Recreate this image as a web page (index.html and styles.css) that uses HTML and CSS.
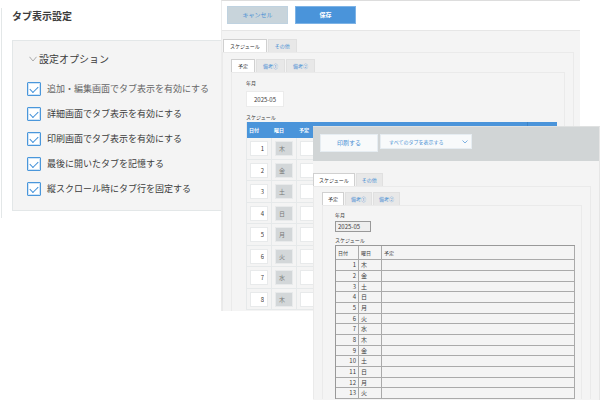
FILE: index.html
```html
<!DOCTYPE html>
<html lang="ja">
  <head>
    <meta charset="UTF-8" />
    <meta name="viewport" content="width=device-width, initial-scale=1.0" />
    <title>タブ表示設定</title>
    <link rel="stylesheet" href="styles.css">
  </head>
  <body>
    <div class="stage">
      <!-- settings -->
      <section class="settings">
        <h1 class="title">タブ表示設定</h1>
        <div class="options">
          <h2 class="options-head">
            <svg class="arrow" viewBox="0 0 8 6"><path d="M0.5 0.8 L4 5 L7.5 0.8" /></svg>
            設定オプション
          </h2>
          <label class="option muted"><input type="checkbox" class="check" checked />追加・編集画面でタブ表示を有効にする</label>
          <label class="option"><input type="checkbox" class="check" checked />詳細画面でタブ表示を有効にする</label>
          <label class="option"><input type="checkbox" class="check" checked />印刷画面でタブ表示を有効にする</label>
          <label class="option"><input type="checkbox" class="check" checked />最後に開いたタブを記憶する</label>
          <label class="option"><input type="checkbox" class="check" checked />縦スクロール時にタブ行を固定する</label>
        </div>
      </section>

      <!-- edit screen -->
      <section class="window edit">
        <div class="toolbar">
          <button type="button" class="btn cancel">キャンセル</button>
          <button type="button" class="btn save">保存</button>
        </div>
        <div class="tabs">
          <button type="button" class="tab active">スケジュール</button>
          <button type="button" class="tab">その他</button>
        </div>
        <div class="panel">
          <div class="tabs">
            <button type="button" class="tab active">予定</button>
            <button type="button" class="tab">備考①</button>
            <button type="button" class="tab">備考②</button>
          </div>
          <div class="panel inner">
            <label class="label" for="month">年月</label>
            <input type="text" class="month" id="month" value="2025-05" />
            <p class="label">スケジュール</p>
            <table class="grid">
              <thead>
                <tr><th class="c-day">日付</th><th class="c-week">曜日</th><th>予定</th><th class="c-end"></th></tr>
              </thead>
              <tbody>
                <tr><td><input class="cell num" aria-label="日付" value="1" /></td><td><span class="cell week">木</span></td><td><input class="cell" aria-label="予定" /></td><td></td></tr>
                <tr><td><input class="cell num" aria-label="日付" value="2" /></td><td><span class="cell week">金</span></td><td><input class="cell" aria-label="予定" /></td><td></td></tr>
                <tr><td><input class="cell num" aria-label="日付" value="3" /></td><td><span class="cell week">土</span></td><td><input class="cell" aria-label="予定" /></td><td></td></tr>
                <tr><td><input class="cell num" aria-label="日付" value="4" /></td><td><span class="cell week">日</span></td><td><input class="cell" aria-label="予定" /></td><td></td></tr>
                <tr><td><input class="cell num" aria-label="日付" value="5" /></td><td><span class="cell week">月</span></td><td><input class="cell" aria-label="予定" /></td><td></td></tr>
                <tr><td><input class="cell num" aria-label="日付" value="6" /></td><td><span class="cell week">火</span></td><td><input class="cell" aria-label="予定" /></td><td></td></tr>
                <tr><td><input class="cell num" aria-label="日付" value="7" /></td><td><span class="cell week">水</span></td><td><input class="cell" aria-label="予定" /></td><td></td></tr>
                <tr><td><input class="cell num" aria-label="日付" value="8" /></td><td><span class="cell week">木</span></td><td><input class="cell" aria-label="予定" /></td><td></td></tr>
              </tbody>
            </table>
          </div>
        </div>
      </section>

      <!-- print screen -->
      <section class="window print">
        <div class="toolbar">
          <button type="button" class="btn do-print">印刷する</button>
          <div class="select-box">
            <select class="select" aria-label="表示するタブ">
              <option>すべてのタブを表示する</option>
            </select>
            <svg class="caret" viewBox="0 0 6 4"><path d="M0.5 0.5 L3 3 L5.5 0.5" /></svg>
          </div>
        </div>
        <div class="tabs">
          <button type="button" class="tab active">スケジュール</button>
          <button type="button" class="tab">その他</button>
        </div>
        <div class="panel">
          <div class="tabs">
            <button type="button" class="tab active">予定</button>
            <button type="button" class="tab">備考①</button>
            <button type="button" class="tab">備考②</button>
          </div>
          <div class="panel inner">
            <label class="label" for="print-month">年月</label>
            <input type="text" class="month" id="print-month" value="2025-05" readonly />
            <p class="label">スケジュール</p>
            <table class="sheet">
              <thead>
                <tr><th class="c-day">日付</th><th class="c-week">曜日</th><th>予定</th></tr>
              </thead>
              <tbody>
                <tr><td>1</td><td>木</td><td></td></tr>
                <tr><td>2</td><td>金</td><td></td></tr>
                <tr><td>3</td><td>土</td><td></td></tr>
                <tr><td>4</td><td>日</td><td></td></tr>
                <tr><td>5</td><td>月</td><td></td></tr>
                <tr><td>6</td><td>火</td><td></td></tr>
                <tr><td>7</td><td>水</td><td></td></tr>
                <tr><td>8</td><td>木</td><td></td></tr>
                <tr><td>9</td><td>金</td><td></td></tr>
                <tr><td>10</td><td>土</td><td></td></tr>
                <tr><td>11</td><td>日</td><td></td></tr>
                <tr><td>12</td><td>月</td><td></td></tr>
                <tr><td>13</td><td>火</td><td></td></tr>
              </tbody>
            </table>
          </div>
        </div>
      </section>
    </div>
  </body>
</html>
```

FILE: styles.css
```css
* {
  box-sizing: border-box;
}
body {
  margin: 0;
  background-color: #fff;
  color: #3c3c3c;
  font-family: "Noto Sans CJK JP", sans-serif;
}
h1,
h2,
p {
  margin: 0;
}
button,
input,
select {
  margin: 0;
  padding: 0;
  border: none;
  border-radius: 0;
  font-family: inherit;
  color: inherit;
}
.stage {
  position: relative;
  height: 100vh;
  padding: 8px 0 0 1px;
  overflow: hidden;
}

/* settings */
.settings {
  width: 240px;
  padding: 0 0 7px 10px;
  border-left: 1px solid #e3e7e8;
}
.title {
  font-size: 10px;
  line-height: 16px;
  font-weight: bold;
}
.options {
  margin-top: 16px;
  padding: 10px 0 9px 14px;
  background-color: #f4f4f4;
  border: 1px solid #e3e7e8;
}
.options-head {
  display: flex;
  align-items: center;
  gap: 2px;
  padding-left: 2px;
  margin-bottom: 9px;
  font-size: 10px;
  line-height: 16px;
  font-weight: normal;
}
.arrow {
  width: 8px;
  height: 6px;
  fill: none;
  stroke: #aaa;
}
.option {
  display: flex;
  align-items: center;
  gap: 6px;
  height: 25px;
  font-size: 9px;
  line-height: 14px;
}
.muted {
  color: #666;
}
.check {
  appearance: none;
  display: flex;
  justify-content: center;
  width: 14px;
  height: 14px;
  padding-top: 3px;
  background-color: #fff;
  border: 1px solid #4a97db;
  border-radius: 1px;
  box-shadow: inset 0 0 0 1px #cfe4f7;
}
.check:checked::after {
  content: "";
  width: 7px;
  height: 4px;
  border-left: 1px solid #3f8fd8;
  border-bottom: 1px solid #3f8fd8;
  transform: rotate(-45deg);
}

/* windows */
.window {
  position: absolute;
  background-color: #f4f4f4;
  font-size: 5px;
  line-height: 8px;
}
.toolbar {
  display: flex;
}
.btn {
  height: 18px;
  font-size: 6px;
  line-height: 10px;
}
.tabs {
  display: flex;
  gap: 1px;
}
.tab {
  height: 13px;
  padding: 0 6px;
  background-color: #e8e8e8;
  border: 1px solid #e0e0e0;
  border-bottom: none;
  font-size: 5px;
  line-height: 8px;
  color: #4a90d4;
}
.tab.active {
  background-color: #fff;
  border-color: #d0d0d0;
  color: #333;
}
.panel {
  border: 1px solid #eaeaea;
  border-bottom: none;
}
.label {
  display: block;
  font-size: 5px;
  line-height: 8px;
}
.month {
  display: block;
  font-size: 6px;
  line-height: 9px;
}
table {
  width: 100%;
  table-layout: fixed;
  border-collapse: separate;
  border-spacing: 0;
}
th,
td {
  padding: 0;
  text-align: left;
}

/* edit screen */
.edit {
  top: 0;
  left: 221px;
  right: 20px;
  border-top: 1px solid #ddd;
  border-left: 1px solid #ececec;
}
.edit .toolbar {
  gap: 7px;
  padding: 5px;
  height: 30px;
  background-color: #fff;
  border-bottom: 1px solid #e6e6e6;
}
.edit .btn {
  width: 61px;
}
.edit .cancel {
  background-color: #c8d4db;
  border: 1px solid #bfd2e0;
  color: #4a90d4;
}
.edit .save {
  background-color: #4a94da;
  border: 1px solid #7db3e6;
  color: #fff;
  font-weight: bold;
}
.edit > .tabs {
  padding: 8px 0 0 1px;
}
.edit > .panel {
  margin-right: 6px;
  padding: 6px 8px 0 8px;
}
.edit .inner {
  padding: 6px 7px 1px 14px;
}
.edit .month {
  width: 38px;
  height: 16px;
  margin: 4px 0 6px;
  background-color: #fff;
  border: 1px solid #ebebeb;
  text-align: center;
}
.grid {
  margin-top: 1px;
  border-left: 1px solid #e6e9ea;
}
.grid th {
  height: 16px;
  padding-left: 2px;
  background-color: #4a94da;
  color: #fff;
}
.grid td {
  height: 22px;
  padding: 0 3px;
  border-right: 1px solid #e6e9ea;
  border-bottom: 1px solid #e6e9ea;
}
.grid tr:nth-child(even) td {
  height: 21px;
}
.c-day,
.c-week {
  width: 25px;
}
.c-end {
  width: 30px;
  border-left: 1px solid #3f84c6;
}
.cell {
  display: block;
  width: 100%;
  height: 15px;
  padding: 0 3px;
  background-color: #fff;
  border: 1px solid #e8eaeb;
  font-size: 6px;
  line-height: 13px;
}
.num {
  text-align: right;
}
.week {
  background-color: #d3d7d9;
  color: #777;
}

/* print screen */
.print {
  top: 126px;
  left: 313px;
  right: 0;
  bottom: 0;
  overflow: hidden;
  border-top: 1px solid #dfe1e1;
  border-right: 1px solid #e6e6e6;
}
.print .toolbar {
  gap: 2px;
  padding: 7px;
  height: 34px;
  background-color: #d1d5d6;
}
.print .do-print {
  width: 58px;
  background-color: #f8fafb;
  border: 1px solid #e6edf2;
  color: #4a90d4;
}
.select-box {
  position: relative;
  width: 92px;
  height: 15px;
}
.select {
  appearance: none;
  width: 100%;
  height: 100%;
  padding-left: 8px;
  background-color: #f8fafb;
  border: 1px solid #e6edf2;
  font-size: 5px;
  line-height: 8px;
  color: #4a90d4;
}
.caret {
  position: absolute;
  top: 6px;
  right: 4px;
  width: 6px;
  height: 4px;
  fill: none;
  stroke: #7fb2e2;
}
.print > .tabs {
  padding-top: 12px;
}
.print .tab {
  padding: 0 5px;
}
.print > .panel {
  margin-right: 8px;
  padding: 5px 8px 0 8px;
}
.print .inner {
  padding: 5px 6px 0 12px;
}
.print .month {
  width: 36px;
  height: 11px;
  margin: 2px 0 4px;
  padding-left: 2px;
  background-color: #eee;
  border: 1px solid #999;
}
.sheet {
  margin-top: 1px;
  border-top: 1px solid #999;
  border-left: 1px solid #999;
}
.sheet th,
.sheet td {
  height: 11px;
  padding: 0 2px;
  border-right: 1px solid #aaa;
  border-bottom: 1px solid #aaa;
  font-weight: normal;
  line-height: 8px;
}
.sheet th {
  height: 14px;
}
.sheet tr:nth-child(3n) td {
  height: 10px;
}
.sheet td:first-child {
  text-align: right;
}
.sheet td {
  font-size: 6px;
}
.sheet .c-day,
.sheet .c-week {
  width: 23px;
}
```
